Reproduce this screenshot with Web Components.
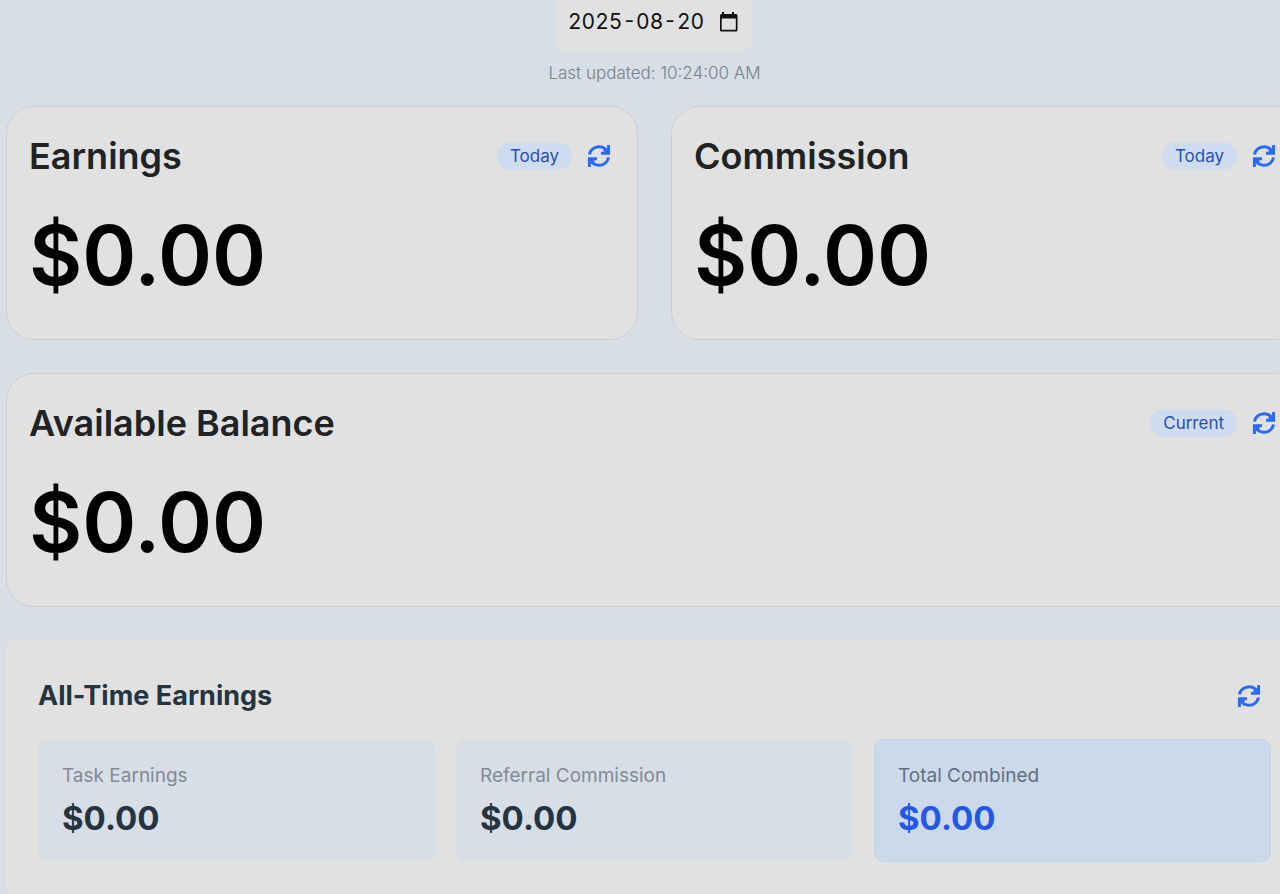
<!DOCTYPE html>
<html lang="en">
<head>
<meta charset="utf-8">
<meta name="viewport" content="width=device-width, initial-scale=1">
<title>Earnings dashboard</title>
<style>
  :root {
    --color-bg: #d7dee6;
    --color-card: #e1e1e1;
    --color-border: #cbced1;
    --color-blue: #2b6af5;
    --color-badge: #cfdbee;
    --color-dark: #263442;
    --color-muted: #838b94;
  }

  body {
    margin: 0;
    overflow-x: hidden;
    background: var(--color-bg);
    font-family: Inter, "Liberation Sans", sans-serif;
  }
</style>
</head>
<body>
<earnings-dashboard>
  <date-picker slot="header" value="2025-08-20" updated="10:24:00 AM"></date-picker>
  <balance-card name="Earnings" badge="Today" amount="$0.00"></balance-card>
  <balance-card name="Commission" badge="Today" amount="$0.00"></balance-card>
  <balance-card class="wide" name="Available Balance" badge="Current" amount="$0.00"></balance-card>
  <totals-panel class="wide" name="All-Time Earnings">
    <stat-tile label="Task Earnings">$0.00</stat-tile>
    <stat-tile label="Referral Commission">$0.00</stat-tile>
    <stat-tile label="Total Combined" highlight>$0.00</stat-tile>
  </totals-panel>
</earnings-dashboard>

<script>
class EarningsDashboard extends HTMLElement {
  connectedCallback() {
    this.attachShadow({ mode: 'open' }).innerHTML = `
      <style>
        :host {
          display: block;
          margin: 0 -23px 0 6px;
        }

        main {
          display: grid;
          grid-template-columns: 1fr 1fr;
          gap: 33px;
          margin-top: 22px;
        }

        ::slotted(.wide) {
          grid-column: 1 / -1;
        }
      </style>
      <slot name="header"></slot>
      <main><slot></slot></main>
    `;
  }
}

class DatePicker extends HTMLElement {
  connectedCallback() {
    this.attachShadow({ mode: 'open' }).innerHTML = `
      <style>
        :host {
          display: flex;
          flex-direction: column;
          align-items: center;
          gap: 12px;
        }

        .field {
          display: flex;
          align-items: center;
          box-sizing: border-box;
          height: 50px;
          padding: 0 12px 6px;
          background: var(--color-card);
          border-radius: 0 0 8px 8px;
        }

        input {
          width: 148px;
          padding: 0;
          border: 0;
          background: none;
          color: #111;
          font: 21px/32px Inter, "Liberation Sans", sans-serif;
          font-variant-numeric: tabular-nums;
        }

        button {
          display: flex;
          padding: 0;
          border: 0;
          background: none;
          color: #111;
          cursor: pointer;
        }

        p {
          margin: 0;
          color: #78818b;
          font-size: 17px;
          font-weight: 300;
          line-height: 22px;
        }
      </style>
      <div class="field">
        <input type="text" aria-label="Date" value="${this.getAttribute('value')}">
        <button type="button" aria-label="Open calendar">
          <svg width="25" height="24" viewBox="0 0 25 24" fill="currentColor">
            <path fill-rule="evenodd" d="M6 2h2v2h8V2h2v2h2q1.500 0 1.500 1.500v14.500q0 1.500-1.500 1.500H5.500Q4 21.500 4 20V5.500Q4 4 5.500 4H6zM5.700 8.500v11.300h14.100V8.500z"/>
          </svg>
        </button>
      </div>
      <p>Last updated: ${this.getAttribute('updated')}</p>
    `;
  }
}

class RefreshButton extends HTMLElement {
  connectedCallback() {
    this.attachShadow({ mode: 'open' }).innerHTML = `
      <style>
        :host {
          display: block;
        }

        button {
          display: block;
          padding: 0;
          border: 0;
          background: none;
          color: var(--color-blue);
          cursor: pointer;
        }

        svg {
          display: block;
        }
      </style>
      <button type="button" aria-label="Refresh">
        <svg width="24" height="24" viewBox="0 0 24 24" fill="none" stroke="currentColor" stroke-width="3">
          <path d="M2.500 10.500C3.200 5.900 7.200 2.700 12 2.700c3.600 0 6.600 1.700 8.600 5M21.600 1v8.300H14M21.500 9.200L17 5.500"/>
          <path d="M21.500 13.500c-.7 4.600-4.700 7.800-9.500 7.800-3.600 0-6.600-1.700-8.600-5M2.400 23v-8.300H10M2.500 14.800L7 18.500"/>
        </svg>
      </button>
    `;
  }
}

class BalanceCard extends HTMLElement {
  connectedCallback() {
    this.attachShadow({ mode: 'open' }).innerHTML = `
      <style>
        :host {
          display: block;
          box-sizing: border-box;
          padding: 25px 26px 33px 22px;
          background: var(--color-card);
          border: 1px solid var(--color-border);
          border-radius: 28px;
        }

        header {
          display: flex;
          align-items: center;
          gap: 15px;
        }

        h2 {
          flex: 1;
          margin: 0;
          color: #202224;
          font-size: 36px;
          font-weight: 600;
          line-height: 48px;
        }

        .badge {
          padding: 0 13px;
          background: var(--color-badge);
          border-radius: 14px;
          color: #2850b4;
          font-size: 17px;
          font-weight: 400;
          line-height: 28px;
        }

        .amount {
          margin: 25px 0 0;
          color: #000;
          font-size: 82px;
          font-weight: 600;
          line-height: 101px;
        }
      </style>
      <header>
        <h2>${this.getAttribute('name')}</h2>
        <span class="badge">${this.getAttribute('badge')}</span>
        <refresh-button></refresh-button>
      </header>
      <p class="amount">${this.getAttribute('amount')}</p>
    `;
  }
}

class TotalsPanel extends HTMLElement {
  connectedCallback() {
    this.attachShadow({ mode: 'open' }).innerHTML = `
      <style>
        :host {
          display: block;
          padding: 33px 32px;
          background: var(--color-card);
          border-radius: 8px;
        }

        header {
          display: flex;
          align-items: center;
          justify-content: space-between;
          padding-right: 10px;
        }

        h2 {
          margin: 0;
          color: var(--color-dark);
          font-size: 27px;
          font-weight: 700;
          line-height: 46px;
        }

        .tiles {
          display: grid;
          grid-template-columns: repeat(3, 1fr);
          gap: 21px;
          margin-top: 20px;
        }
      </style>
      <header>
        <h2>${this.getAttribute('name')}</h2>
        <refresh-button></refresh-button>
      </header>
      <div class="tiles"><slot></slot></div>
    `;
  }
}

class StatTile extends HTMLElement {
  connectedCallback() {
    this.attachShadow({ mode: 'open' }).innerHTML = `
      <style>
        :host {
          display: block;
          padding: 23px 24px;
          background: var(--color-bg);
          border-radius: 10px;
          color: var(--color-dark);
        }

        :host([highlight]) {
          background: #ccd9eb;
          box-shadow: inset 0 0 0 1px #c0d5ef;
          color: #2457e6;
        }

        .label {
          margin: 0;
          color: var(--color-muted);
          font-size: 19px;
          line-height: 28px;
        }

        :host([highlight]) .label {
          color: #626e7c;
        }

        .value {
          margin: 7px 0 0;
          font-size: 33px;
          font-weight: 700;
          line-height: 42px;
        }
      </style>
      <p class="label">${this.getAttribute('label')}</p>
      <p class="value"><slot></slot></p>
    `;
  }
}

customElements.define('earnings-dashboard', EarningsDashboard);
customElements.define('date-picker', DatePicker);
customElements.define('refresh-button', RefreshButton);
customElements.define('balance-card', BalanceCard);
customElements.define('totals-panel', TotalsPanel);
customElements.define('stat-tile', StatTile);
</script>
</body>
</html>
